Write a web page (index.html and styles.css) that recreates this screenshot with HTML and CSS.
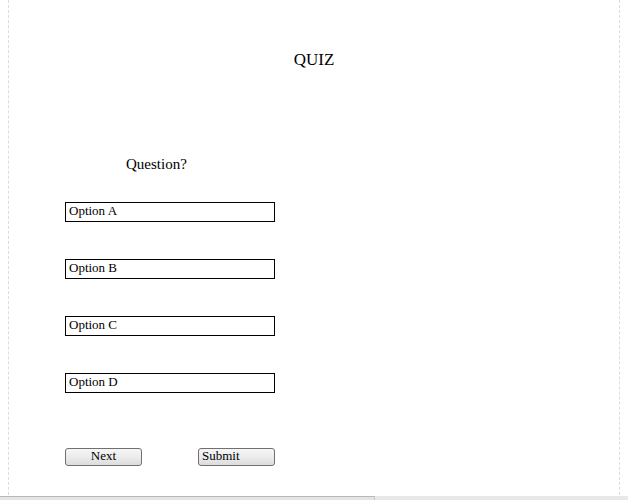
FILE: index.html
```html
<!DOCTYPE html>
<html>
<head>
<meta charset="utf-8">
<title>Quiz</title>
<link rel="stylesheet" href="styles.css">
</head>
<body>
<div class="frame">
  <h1 class="title">QUIZ</h1>
  <p class="question">Question?</p>
  <div class="options">
    <input class="option" type="text" value="Option A" readonly>
    <input class="option" type="text" value="Option B" readonly>
    <input class="option" type="text" value="Option C" readonly>
    <input class="option" type="text" value="Option D" readonly>
  </div>
  <div class="actions">
    <button class="btn btn-next" type="button">Next</button>
    <button class="btn btn-submit" type="button">Submit</button>
  </div>
</div>
<div class="hscroll"><div class="hscroll-thumb"></div></div>
</body>
</html>
```
FILE: styles.css
```css
html, body {
  margin: 0;
  padding: 0;
  background: #fff;
  overflow: hidden;
}
body {
  font-family: "Liberation Serif", "Times New Roman", serif;
  color: #000;
}
.frame {
  margin: 0 8px;
  height: 500px;
  border-left: 1px dashed #dcdcdc;
  border-right: 1px dashed #dcdcdc;
  box-sizing: border-box;
  display: flex;
  flex-direction: column;
}
.title {
  margin: 50px 0 0;
  font-size: 17px;
  font-weight: normal;
  line-height: 20px;
  text-align: center;
}
.question {
  margin: 86px 0 0 117px;
  font-size: 15px;
  line-height: 17px;
}
.options {
  margin: 29px 0 0 56px;
  display: flex;
  flex-direction: column;
  gap: 37px;
}
.option {
  width: 210px;
  height: 20px;
  box-sizing: border-box;
  border: 1px solid #000;
  padding: 0 3px 2px;
  margin: 0;
  font-family: "Liberation Serif", "Times New Roman", serif;
  font-size: 13px;
  color: #000;
  outline: none;
  background: #fff;
}
.actions {
  margin: 55px 0 0 56px;
  display: flex;
  gap: 56px;
}
.btn {
  width: 77px;
  height: 18px;
  box-sizing: border-box;
  border: 1px solid #707070;
  border-radius: 3px;
  background: linear-gradient(#f6f6f6 0%, #ececec 50%, #dcdcdc 100%);
  font-family: "Liberation Serif", "Times New Roman", serif;
  font-size: 13px;
  line-height: 14px;
  padding: 0 3px 2px;
  margin: 0;
  color: #000;
}
.btn-next {
  text-align: center;
}
.btn-submit {
  text-align: left;
}
.hscroll {
  position: fixed;
  left: 0;
  right: 0;
  bottom: 0;
  height: 4px;
  background: #e8e8e8;
}
.hscroll-thumb {
  width: 375px;
  height: 4px;
  box-sizing: border-box;
  border-top: 1px solid #b8b8b8;
  border-right: 1px solid #c8c8c8;
  background: #e4e4e4;
}
```
